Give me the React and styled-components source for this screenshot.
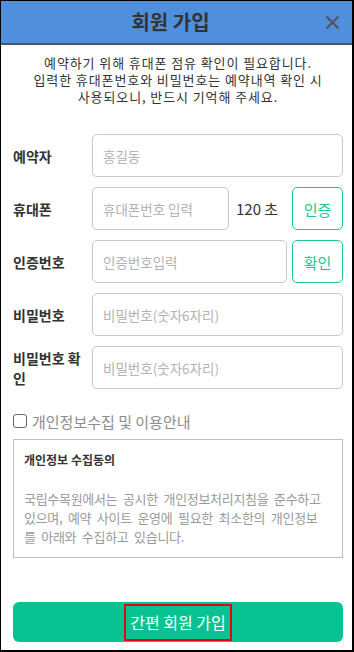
import React from "react";
import styled, { createGlobalStyle } from "styled-components";

const GlobalStyle = createGlobalStyle`
  * { box-sizing: border-box; }
  body {
    margin: 0;
    font-family: "Noto Sans CJK KR", "Noto Sans", sans-serif;
    color: #333;
    background: #fff;
  }
`;

const Frame = styled.div`
  width: 354px;
  height: 652px;
  display: flex;
  flex-direction: column;
  border-top: 1px solid #000;
  border-left: 1px solid #000;
  border-right: 2px solid #000;
  border-bottom: 2px solid #000;
  overflow: hidden;
`;

const Header = styled.header`
  height: 44px;
  flex-shrink: 0;
  display: grid;
  grid-template-columns: 1fr auto 1fr;
  align-items: center;
  background: #4f8fdb;
  border-bottom: 2px solid #555;
  padding: 0 12px 0 0;
`;

const Title = styled.h1`
  grid-column: 2;
  margin: 0;
  font-size: 20px;
  font-weight: 700;
  color: #333;
  line-height: 1;
`;

const Close = styled.button`
  grid-column: 3;
  justify-self: end;
  display: flex;
  padding: 0;
  border: none;
  background: none;
  cursor: pointer;
`;

const Body = styled.main`
  flex: 1;
  display: flex;
  flex-direction: column;
  padding: 9px 9px 8px 12px;
`;

const Intro = styled.p`
  margin: 0 0 29px;
  font-size: 13px;
  letter-spacing: 0.9px;
  line-height: 17px;
  text-align: center;
  color: #333;
`;

const Form = styled.div`
  display: flex;
  flex-direction: column;
  gap: 10px;
`;

const Row = styled.div`
  display: flex;
  align-items: center;
  height: 43px;
`;

const Label = styled.label`
  width: 79px;
  flex-shrink: 0;
  padding-right: 4px;
  font-size: 14px;
  font-weight: 700;
  line-height: 20px;
  color: #333;
  word-break: break-all;
`;

const Controls = styled.div`
  flex: 1;
  min-width: 0;
  display: flex;
  align-items: stretch;
  gap: 5px;
  height: 100%;
`;

const Input = styled.input`
  flex: 1;
  width: 0;
  min-width: 0;
  height: 100%;
  padding: 0 10px;
  border: 1px solid #c8c8c8;
  border-radius: 5px;
  font-family: inherit;
  font-size: 13.5px;
  color: #333;
  outline: none;

  &::placeholder {
    color: #b3b3b3;
  }
`;

const Timer = styled.span`
  width: 53px;
  flex-shrink: 0;
  padding-left: 2px;
  display: flex;
  align-items: center;
  font-size: 15px;
  color: #333;
`;

const GreenButton = styled.button`
  width: 51px;
  flex-shrink: 0;
  border: 1px solid #1dc495;
  border-radius: 5px;
  background: #fff;
  color: #1dc495;
  font-family: inherit;
  font-size: 15px;
  padding: 2px 0 0;
  cursor: pointer;
`;

const Agree = styled.label`
  display: flex;
  align-items: center;
  gap: 5px;
  margin-top: 22px;
  height: 20px;
  font-size: 15px;
  color: #8c8c8c;
`;

const Check = styled.span`
  width: 14px;
  height: 14px;
  border: 1.5px solid #666;
  border-radius: 3px;
  background: #fff;
`;

const Terms = styled.div`
  margin-top: 8px;
  height: 119px;
  flex-shrink: 0;
  border: 1px solid #bdbdbd;
  overflow-y: scroll;
  padding: 11px 14px 0 10px;
`;

const TermsTitle = styled.h2`
  margin: 0 0 21px;
  font-size: 12px;
  font-weight: 700;
  line-height: 17px;
  color: #333;
`;

const TermsText = styled.p`
  margin: 0 0 16px;
  font-size: 13px;
  letter-spacing: -0.3px;
  word-spacing: 3px;
  line-height: 19px;
  color: #9a9a9a;
  word-break: break-all;
`;

const Submit = styled.button`
  margin-top: auto;
  height: 40px;
  flex-shrink: 0;
  display: flex;
  align-items: center;
  justify-content: center;
  border: none;
  border-radius: 6px;
  background: #06c391;
  cursor: pointer;
  font-family: inherit;
`;

const SubmitText = styled.span`
  padding: 0 4px;
  line-height: 33px;
  border: 2px solid #e60012;
  font-size: 16px;
  color: #fff;
`;

const rows = [
  { label: "예약자", placeholder: "홍길동" },
  { label: "휴대폰", placeholder: "휴대폰번호 입력", timer: "120 초", action: "인증" },
  { label: "인증번호", placeholder: "인증번호입력", action: "확인" },
  { label: "비밀번호", placeholder: "비밀번호(숫자6자리)", type: "password" },
  { label: "비밀번호 확인", placeholder: "비밀번호(숫자6자리)", type: "password" },
];

const App = () => {
  return (
    <>
      <GlobalStyle />
      <Frame>
        <Header>
          <Title>회원 가입</Title>
          <Close aria-label="닫기">
            <svg width="15" height="15" viewBox="0 0 15 15">
              <path d="M1.5 1.5 L13.5 13.5 M13.5 1.5 L1.5 13.5" stroke="#555" strokeWidth="2" />
            </svg>
          </Close>
        </Header>
        <Body>
          <Intro>
            예약하기 위해 휴대폰 점유 확인이 필요합니다.
            <br />
            입력한 휴대폰번호와 비밀번호는 예약내역 확인 시
            <br />
            사용되오니, 반드시 기억해 주세요.
          </Intro>
          <Form>
            {rows.map((row) => (
              <Row key={row.label}>
                <Label>{row.label}</Label>
                <Controls>
                  <Input type={row.type || "text"} placeholder={row.placeholder} />
                  {row.timer && <Timer>{row.timer}</Timer>}
                  {row.action && <GreenButton>{row.action}</GreenButton>}
                </Controls>
              </Row>
            ))}
          </Form>
          <Agree>
            <Check />
            개인정보수집 및 이용안내
          </Agree>
          <Terms>
            <TermsTitle>개인정보 수집동의</TermsTitle>
            <TermsText>
              국립수목원에서는 공시한 개인정보처리지침을 준수하고 있으며, 예약 사이트 운영에 필요한 최소한의 개인정보를 아래와 수집하고 있습니다.
            </TermsText>
            <TermsText>
              1. 수집하는 개인정보 항목: 예약자 성명, 휴대폰번호, 비밀번호
            </TermsText>
            <TermsText>
              2. 개인정보의 수집 및 이용 목적: 예약 확인 및 변경, 취소 등 예약 관리와 관련된 안내 문자 발송
            </TermsText>
            <TermsText>
              3. 개인정보의 보유 및 이용 기간: 예약일로부터 1년간 보관하며, 기간이 지나면 지체 없이 파기합니다.
            </TermsText>
            <TermsText>
              4. 동의를 거부할 권리 및 불이익: 개인정보 수집에 동의하지 않을 수 있으며, 동의하지 않을 경우 예약 서비스 이용이 제한됩니다.
            </TermsText>
            <TermsText>
              본인은 위의 내용을 충분히 이해하였으며, 개인정보 수집 및 이용에 동의합니다.
            </TermsText>
          </Terms>
          <Submit>
            <SubmitText>간편 회원 가입</SubmitText>
          </Submit>
        </Body>
      </Frame>
    </>
  );
};

export default App;
